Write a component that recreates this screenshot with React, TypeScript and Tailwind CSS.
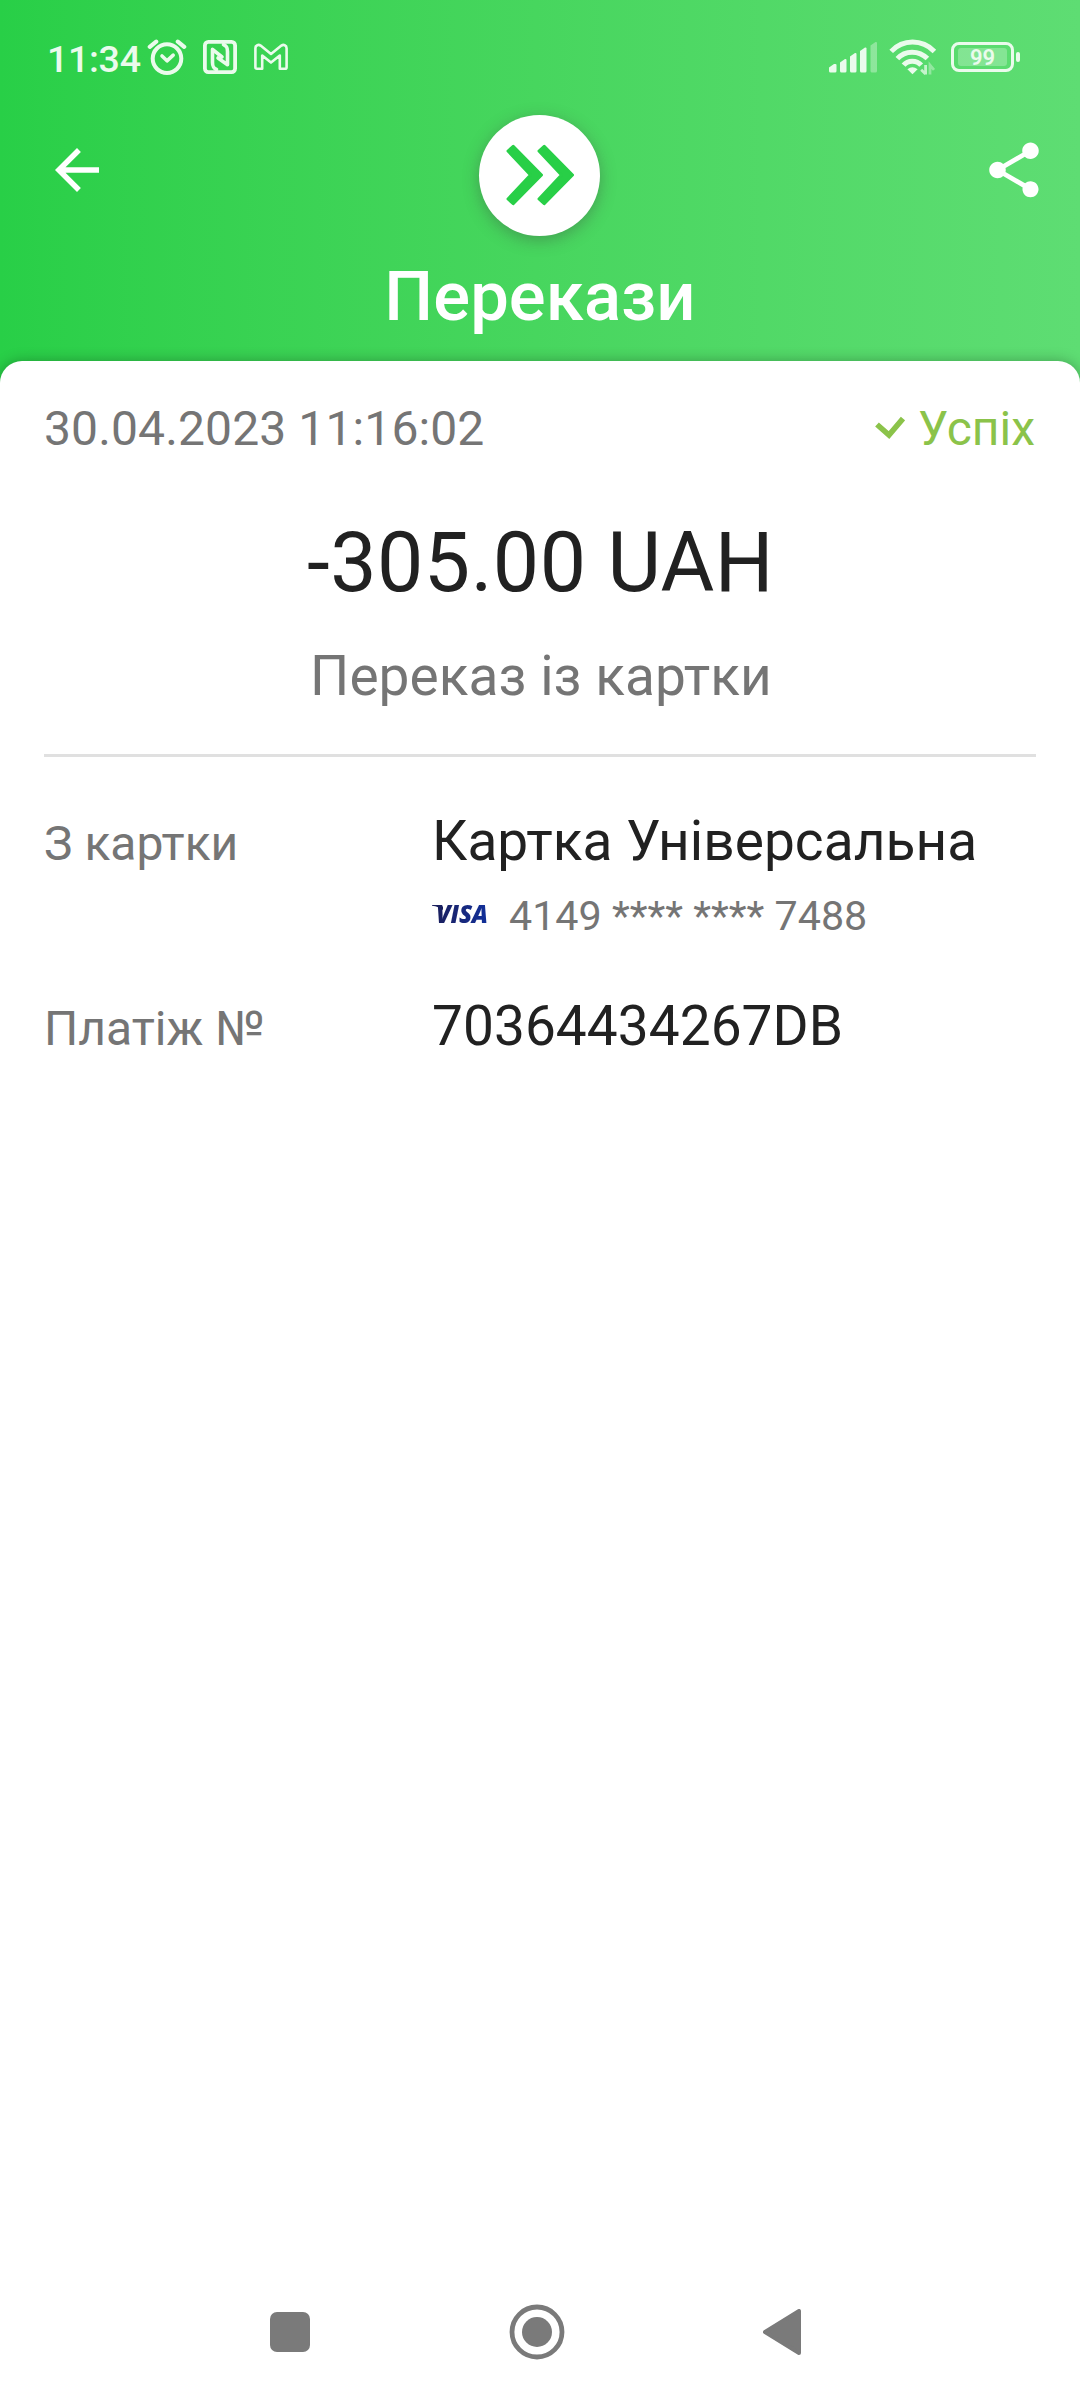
import type { ReactNode } from 'react';

interface DetailRow {
  label: string;
  value: string;
  card?: string;
}

const details: DetailRow[] = [
  { label: 'З картки', value: 'Картка Універсальна', card: '4149 **** **** 7488' },
  { label: 'Платіж №', value: '70364434267DB' },
];

function StatusBar() {
  return (
    <div className="flex h-[114px] items-center pl-[47px] pr-[60px] text-[#eafbec]">
      <span className="w-[93px] pt-[4px] text-[37.5px] leading-[44px] font-medium tracking-[-0.3px]">11:34</span>

      {/* Alarm */}
      <svg width="40" height="36" viewBox="0 0 40 36" fill="none" stroke="currentColor" className="ml-[7px]">
        <circle cx="20" cy="19.6" r="14.3" strokeWidth="4" />
        <path d="M2.8 7.8 9.2 2.6M37.2 7.8 30.8 2.6" strokeWidth="4.2" strokeLinecap="round" />
        <path d="M15 17l5 4.8 6.2-5.6" strokeWidth="3.6" strokeLinecap="round" strokeLinejoin="round" />
      </svg>

      {/* NFC */}
      <svg width="34" height="34" viewBox="0 0 34 34" fill="none" stroke="currentColor" strokeWidth="3.6" className="ml-[16px]">
        <rect x="1.9" y="1.9" width="30.2" height="30.2" rx="3.5" strokeWidth="3.8" />
        <path d="M13.5 29.5c-3.2-1.5-4-3-4-7V9.4L19 17" strokeLinejoin="round" strokeLinecap="round" />
        <path d="M20.5 4.5c3.2 1.5 4 3 4 7v13.2L15 18" strokeLinejoin="round" strokeLinecap="round" />
      </svg>

      {/* Gmail */}
      <svg width="34" height="28" viewBox="0 0 34 28" fill="none" stroke="currentColor" strokeWidth="2.6" strokeLinejoin="round" className="ml-[17px]">
        <path d="M1.4 5.2C1.4 2 4.6 1.2 6.6 2.6L17 11 27.4 2.6C29.4 1.2 32.6 2 32.6 5.2V24.2Q32.6 25.8 31 25.8H25.8V12.6L17 19.6 8.2 12.6V25.8H3Q1.4 25.8 1.4 24.2Z" />
      </svg>

      {/* Signal */}
      <svg width="48" height="32" viewBox="0 0 48 32" fill="currentColor" className="ml-auto">
        <path d="M0 26.5 5 23h1.5Q7.5 23 7.5 24v6q0 1.5-1.5 1.5H1.5Q0 31.5 0 30z" />
        <path d="M11 21.5 16 18h.5q1 0 1 1v11q0 1.5-1.5 1.5h-3.5Q11 31.5 11 30z" />
        <path d="M21 15.5 26 12h.5q1 0 1 1v17q0 1.5-1.5 1.5h-3.5Q21 31.5 21 30z" />
        <path d="M31 10 36 6.5h.5q1 0 1 1V30q0 1.5-1.5 1.5h-3.5Q31 31.5 31 30z" />
        <path opacity=".38" d="M41.5 4.5 46.5 1h.5q1 0 1 1v28q0 1.5-1.5 1.5H43q-1.5 0-1.5-1.5z" />
      </svg>

      {/* Wi-Fi */}
      <svg width="48" height="36" viewBox="0 0 48 36" fill="none" className="ml-[12px]">
        <g stroke="currentColor" strokeWidth="5">
          <path d="M2.2 12.4C14 0 33 0 45.4 12.4" />
          <path d="M8.4 19.6C16 11 30 11 38.4 19.6" />
          <path d="M14.6 26.2C19 20.8 27.6 20.8 32.2 26.2" />
        </g>
        <path d="M18.4 30.2q5-4 10.2 0L23.5 35.2z" fill="currentColor" />
        <path d="M36.6 26v9.5M32.2 30.8l4.4 4.2" stroke="currentColor" strokeWidth="2.8" opacity=".75" />
        <path d="M41 35.500V26l4 4.800" stroke="currentColor" strokeWidth="2.8" opacity=".4" />
      </svg>

      {/* Battery */}
      <div className="ml-[14px] flex h-[30px] w-[63px] items-center justify-center rounded-[8px] border-3 border-current">
        <div className="flex h-[18px] w-[49px] items-center justify-center rounded-[3px] bg-white/25">
          <span className="pt-[2px] text-[22px] leading-[22px] font-semibold">99</span>
        </div>
      </div>
      <div className="ml-[2px] h-[10px] w-[4px] rounded-full bg-[#eafbec]" />
    </div>
  );
}

function Header() {
  return (
    <header className="h-[400px] bg-linear-to-r from-[#28cf47] to-[#5edd73] text-white">
      <StatusBar />
      <div className="flex h-[122px] items-start justify-between pt-px pr-[33px] pl-[44px]">
        <svg width="66" height="66" viewBox="0 0 24 24" fill="currentColor" className="mt-[22px]">
          <path d="M20 11H7.83l5.59-5.59L12 4l-8 8 8 8 1.41-1.41L7.83 13H20v-2z" />
        </svg>
        <div className="mr-[12px] flex size-[121px] items-center justify-center rounded-full bg-white shadow-[0_4px_16px_rgba(60,60,60,0.36)]">
          <svg width="68" height="62" viewBox="0 0 68 62" fill="#28cf47" stroke="#28cf47" strokeWidth="3" strokeLinejoin="round" className="-mt-px">
            <path d="M2 7 7.2 2.3 35.5 31 7.2 59.7 2 55 24.5 31z" />
            <path d="M33 7 38.2 2.3 66.5 31 38.2 59.7 33 55 55.5 31z" />
          </svg>
        </div>
        <svg width="66" height="66" viewBox="0 0 24 24" fill="currentColor" className="mt-[22px]">
          <path d="M18 16.08c-.76 0-1.44.3-1.96.77L8.91 12.7c.05-.23.09-.46.09-.7s-.04-.47-.09-.7l7.05-4.11c.54.5 1.25.81 2.04.81 1.66 0 3-1.34 3-3s-1.34-3-3-3-3 1.34-3 3c0 .24.04.47.09.7L8.04 9.81C7.5 9.31 6.79 9 6 9c-1.66 0-3 1.34-3 3s1.34 3 3 3c.79 0 1.5-.31 2.04-.81l7.12 4.16c-.05.21-.08.43-.08.65 0 1.61 1.31 2.92 2.92 2.92 1.61 0 2.92-1.31 2.92-2.92s-1.31-2.92-2.92-2.92z" />
        </svg>
      </div>
      <h1 className="text-center text-[68.75px] leading-[121px] font-medium tracking-[0.1px]">Перекази</h1>
    </header>
  );
}

function VisaLogo() {
  return (
    <span className="relative flex h-[20px] w-[55px] items-center">
      <svg width="12" height="5" viewBox="0 0 12 5" className="absolute top-px left-0" fill="#1a1f5e">
        <path d="M0 0h8q2 0 3 2v3Q7 1.5 0 .8z" />
      </svg>
      <span className="ml-[4px] bg-linear-to-r from-[#1a1f5e] to-[#10309b] bg-clip-text font-['Open_Sans'] text-[24px] leading-[20px] font-extrabold tracking-[-0.2px] text-transparent italic">
        VISA
      </span>
    </span>
  );
}

function Row({ label, children }: { label: string; children: ReactNode }) {
  return (
    <div className="flex">
      <div className="w-[388px] pt-[3px] text-[48px] leading-[64px] text-[#757575]">{label}</div>
      <div className="flex-1">{children}</div>
    </div>
  );
}

function NavBar() {
  return (
    <nav className="relative flex h-[136px] items-center bg-white pl-[270px] text-[#7a7a7a]">
      <div className="size-[40px] rounded-[7px] bg-current" />
      <svg width="56" height="56" viewBox="0 0 56 56" fill="none" className="ml-[199px]">
        <circle cx="28" cy="28" r="25" stroke="currentColor" strokeWidth="4.8" />
        <circle cx="28" cy="28" r="15" fill="currentColor" />
      </svg>
      <svg width="38" height="46" viewBox="0 0 38 46" className="ml-[198px]">
        <path d="M2 23 36 2v42z" fill="currentColor" stroke="currentColor" strokeWidth="4" strokeLinejoin="round" />
      </svg>
    </nav>
  );
}

function App() {
  return (
    <div className="flex h-[2400px] w-[1080px] flex-col overflow-hidden bg-white font-[Roboto,sans-serif]">
      <Header />
      <main className="-mt-[39px] flex-1 rounded-t-[22px] bg-white px-[44px] pt-[38px] shadow-[0_0_14px_rgba(0,0,0,0.28)]">
        <div className="flex items-center justify-between text-[48px] leading-[60px]">
          <span className="tracking-[0.12px] text-[#757575]">30.04.2023 11:16:02</span>
          <span className="mr-px flex items-center text-[#8bc34a]">
            <svg width="30" height="23" viewBox="0 0 30 23" fill="none" className="mr-[13px] mb-[3px]">
              <path d="M2 8.5 14 19 28 2.5" stroke="currentColor" strokeWidth="5.6" />
            </svg>
            Успіх
          </span>
        </div>

        <div className="mt-[49px] pl-px text-center text-[82.5px] leading-[110px] tracking-[0.45px] text-[#212121]">-305.00 UAH</div>
        <div className="mt-[18px] pl-[2px] text-center text-[55px] leading-[80px] tracking-[0.05px] text-[#757575]">Переказ із картки</div>

        <hr className="mt-[38px] border-0 border-t-3 border-[#e0e0e0]" />

        {/* Payment details */}
        <div className="flex flex-col gap-[35px] pt-[52px]">
          {details.map((item) => (
            <Row key={item.label} label={item.label}>
              <div className="text-[55px] leading-[64px] tracking-[0.05px] text-[#212121]">{item.value}</div>
              {item.card && (
                <div className="mt-[11px] flex h-[75px] items-start text-[41.25px] leading-[64px] text-[#757575]">
                  <span className="mr-[22px] flex h-[60px] items-center">
                    <VisaLogo />
                  </span>
                  {item.card}
                </div>
              )}
            </Row>
          ))}
        </div>
      </main>
      <NavBar />
    </div>
  );
}

export default App;
